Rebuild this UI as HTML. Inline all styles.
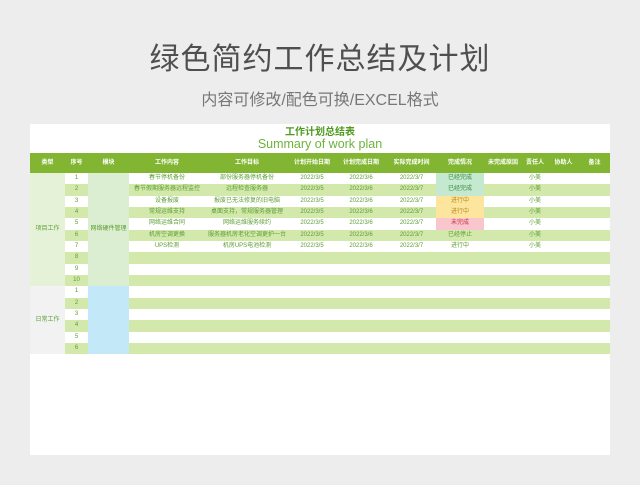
<!DOCTYPE html>
<html><head><meta charset="utf-8"><style>
*{margin:0;padding:0;box-sizing:border-box}
body{width:640px;height:485px;background:#ededed;font-family:"Liberation Sans","Noto Sans CJK SC",sans-serif;position:relative;overflow:hidden}
.t1{position:absolute;top:34px;left:0;width:640px;text-align:center;font-size:30px;color:#4f4f4f;letter-spacing:1px}
.t2{position:absolute;top:86px;left:0;width:640px;text-align:center;font-size:16px;color:#777}
.card{position:absolute;left:30px;top:124px;width:580px;height:331px;background:#fff}
.h1{position:absolute;top:-1px;left:0;width:580px;text-align:center;font-size:10px;font-weight:bold;color:#4e9a1e}
.h2{position:absolute;top:13px;left:0;width:580px;text-align:center;font-size:12.5px;color:#6cb33c}
table{position:absolute;left:30px;top:153px;width:580px;border-collapse:collapse;table-layout:fixed}
td,th{font-size:6px;text-align:center;vertical-align:middle;color:#5c9e34;padding:0;white-space:nowrap;overflow:hidden;line-height:11px}
th{background:#82b632;color:#fff;height:20px;font-weight:bold}
td{height:11.33px}
tr.g td{background:#d3e8ab}
td.a{background:#e6f2d8!important}
td.b{background:#dbeed2!important}
td.c{background:#f2f2f2!important}
td.d{background:#c3e9f8!important}
td.ok{background:#c4e9d0!important;color:#3b8a3b}
td.ing{background:#fde59d!important;color:#b88a20}
td.no{background:#f9c6cd!important;color:#c0304a}
</style></head><body>
<div class="t1">绿色简约工作总结及计划</div>
<div class="t2">内容可修改/配色可换/EXCEL格式</div>
<div class="card"><div class="h1">工作计划总结表</div><div class="h2">Summary of work plan</div></div>
<table>
<colgroup><col style="width:35px"><col style="width:23px"><col style="width:41px"><col style="width:76px"><col style="width:84px"><col style="width:46px"><col style="width:52px"><col style="width:49px"><col style="width:48px"><col style="width:38px"><col style="width:26px"><col style="width:31px"><col style="width:31px"></colgroup>
<tr><th>类型</th><th>序号</th><th>模块</th><th>工作内容</th><th>工作目标</th><th>计划开始日期</th><th>计划完成日期</th><th>实际完成时间</th><th>完成情况</th><th>未完成原因</th><th>责任人</th><th>协助人</th><th>备注</th></tr>
<tr><td class="a" rowspan="10">项目工作</td><td>1</td><td class="b" rowspan="10">网络硬件管理</td><td>春节停机备份</td><td>部份服务器停机备份</td><td>2022/3/5</td><td>2022/3/6</td><td>2022/3/7</td><td class="ok">已经完成</td><td></td><td>小美</td><td></td><td></td></tr>
<tr class="g"><td>2</td><td>春节假期服务器远程监控</td><td>远程检查服务器</td><td>2022/3/5</td><td>2022/3/6</td><td>2022/3/7</td><td class="ok">已经完成</td><td></td><td>小美</td><td></td><td></td></tr>
<tr><td>3</td><td>设备报废</td><td>报废已无法修复的旧电脑</td><td>2022/3/5</td><td>2022/3/6</td><td>2022/3/7</td><td class="ing">进行中</td><td></td><td>小美</td><td></td><td></td></tr>
<tr class="g"><td>4</td><td>常规运维支持</td><td>桌面支持，常规服务器管理</td><td>2022/3/5</td><td>2022/3/6</td><td>2022/3/7</td><td class="ing">进行中</td><td></td><td>小美</td><td></td><td></td></tr>
<tr><td>5</td><td>网络运维合同</td><td>网络运维服务续约</td><td>2022/3/5</td><td>2022/3/6</td><td>2022/3/7</td><td class="no">未完成</td><td></td><td>小美</td><td></td><td></td></tr>
<tr class="g"><td>6</td><td>机房空调更换</td><td>服务器机房老化空调更护一台</td><td>2022/3/5</td><td>2022/3/6</td><td>2022/3/7</td><td>已经停止</td><td></td><td>小美</td><td></td><td></td></tr>
<tr><td>7</td><td>UPS检测</td><td>机房UPS电池检测</td><td>2022/3/5</td><td>2022/3/6</td><td>2022/3/7</td><td>进行中</td><td></td><td>小美</td><td></td><td></td></tr>
<tr class="g"><td>8</td><td></td><td></td><td></td><td></td><td></td><td></td><td></td><td></td><td></td><td></td></tr>
<tr><td>9</td><td></td><td></td><td></td><td></td><td></td><td></td><td></td><td></td><td></td><td></td></tr>
<tr class="g"><td>10</td><td></td><td></td><td></td><td></td><td></td><td></td><td></td><td></td><td></td><td></td></tr>
<tr><td class="c" rowspan="6">日常工作</td><td>1</td><td class="d" rowspan="6"></td><td></td><td></td><td></td><td></td><td></td><td></td><td></td><td></td><td></td><td></td></tr>
<tr class="g"><td>2</td><td></td><td></td><td></td><td></td><td></td><td></td><td></td><td></td><td></td><td></td></tr>
<tr><td>3</td><td></td><td></td><td></td><td></td><td></td><td></td><td></td><td></td><td></td><td></td></tr>
<tr class="g"><td>4</td><td></td><td></td><td></td><td></td><td></td><td></td><td></td><td></td><td></td><td></td></tr>
<tr><td>5</td><td></td><td></td><td></td><td></td><td></td><td></td><td></td><td></td><td></td><td></td></tr>
<tr class="g"><td>6</td><td></td><td></td><td></td><td></td><td></td><td></td><td></td><td></td><td></td><td></td></tr>
</table>
</body></html>
